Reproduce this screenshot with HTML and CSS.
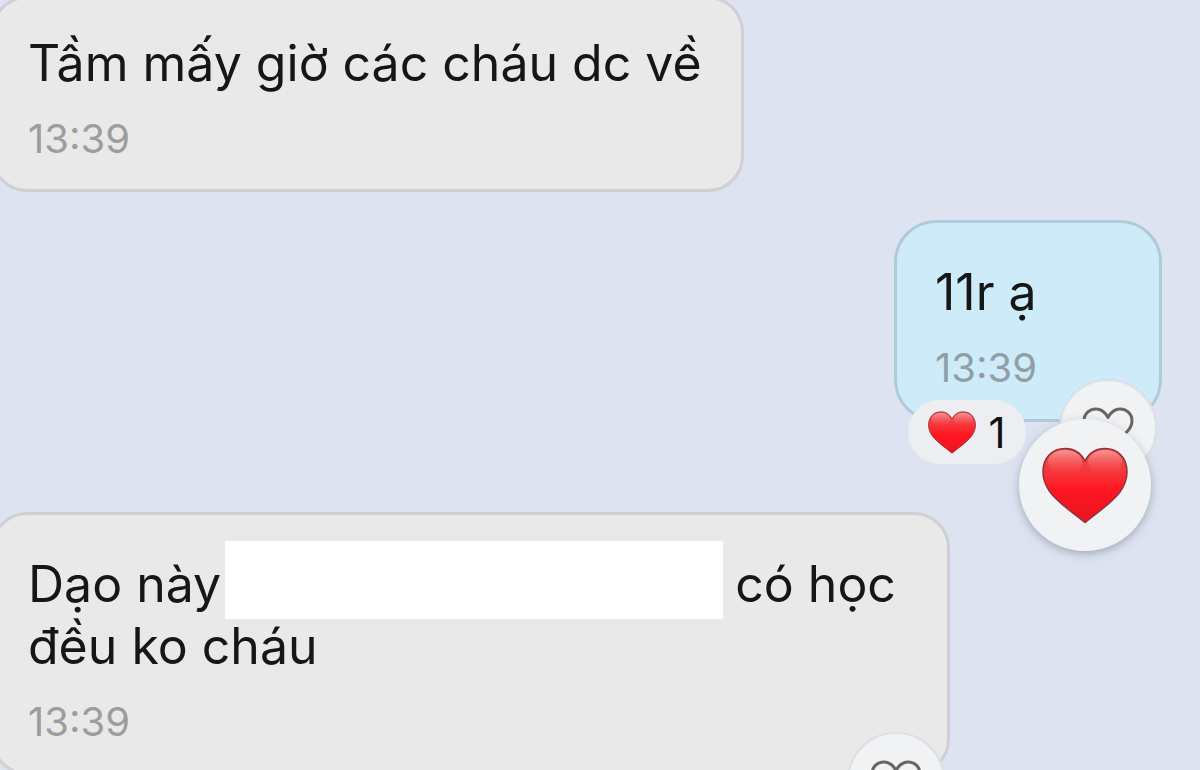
FILE: index.html
```html
<!DOCTYPE html>
<html lang="vi">
<head>
<meta charset="utf-8">
<meta name="viewport" content="width=device-width, initial-scale=1">
<title>Tin nhắn</title>
<link rel="stylesheet" href="styles.css">
</head>
<body>
<svg class="defs" aria-hidden="true">
  <defs>
    <linearGradient id="red" x1="0" y1="0" x2="0" y2="1">
      <stop offset="0" stop-color="#ea5052"/>
      <stop offset="0.3" stop-color="#f5383d"/>
      <stop offset="0.55" stop-color="#ff1722"/>
      <stop offset="1" stop-color="#e9141f"/>
    </linearGradient>
    <linearGradient id="gloss" x1="0" y1="0" x2="0" y2="1">
      <stop offset="0" stop-color="#ffc4bf" stop-opacity="0.6"/>
      <stop offset="1" stop-color="#ff6a68" stop-opacity="0"/>
    </linearGradient>
    <symbol id="heart-red" viewBox="0 0 86 77">
      <path d="M43 75.500C33 67 17 57 8 45C3 38 1 32 1 25C1 10 11 1.500 23 1.500C32 1.500 39 6 43 14C47 6 54 1.500 63 1.500C75 1.500 85 10 85 25C85 32 83 38 78 45C69 57 53 67 43 75.500Z" fill="url(#red)" stroke="#91343d" stroke-width="1.500"/>
      <ellipse cx="23" cy="15" rx="17" ry="12" fill="url(#gloss)"/>
      <ellipse cx="63" cy="15" rx="17" ry="12" fill="url(#gloss)"/>
    </symbol>
    <symbol id="heart-line" viewBox="0 0 52 42">
      <path d="M26 10.500C23 5 19 2 14 2C7 2 2 7 2 14C2 25 16 31 26 40C36 31 50 25 50 14C50 7 45 2 38 2C33 2 29 5 26 10.500Z" fill="none" stroke="#666" stroke-width="3" stroke-linejoin="round"/>
    </symbol>
  </defs>
</svg>
<main class="chat">
  <article class="bubble received">
    <p class="text">Tầm mấy giờ các cháu dc về</p>
    <time class="time">13:39</time>
  </article>
  <article class="bubble sent">
    <p class="text">11r ạ</p>
    <time class="time">13:39</time>
    <button class="count" type="button" aria-label="1 lượt thích"><svg class="count-heart"><use href="#heart-red"/></svg><span>1</span></button>
    <button class="react" type="button" aria-label="Thả tim"><svg class="react-heart"><use href="#heart-line"/></svg></button>
    <button class="big" type="button" aria-label="Tim"><svg class="big-heart"><use href="#heart-red"/></svg></button>
  </article>
  <article class="bubble received question">
    <p class="text">Dạo này<span class="redacted"></span>có học<br>đều ko cháu</p>
    <time class="time">13:39</time>
    <button class="react" type="button" aria-label="Thả tim"><svg class="react-heart"><use href="#heart-line"/></svg></button>
  </article>
</main>
</body>
</html>
```
FILE: styles.css
```css
* { box-sizing: border-box; }
body {
  margin: 0;
  min-height: 100vh;
  overflow: hidden;
  background: #dde3f0;
  font-family: Inter, "Noto Sans", sans-serif;
  color: #161616;
}
.defs { position: absolute; width: 0; height: 0; }
.chat {
  display: flex;
  flex-direction: column;
  height: 100vh;
  margin: -4px 38px 0 -9px;
}
.bubble {
  position: relative;
  flex: none;
  border: 3px solid #cfd0d4;
  border-radius: 36px;
}
.received {
  align-self: flex-start;
  padding: 33px 39px 26px 34px;
  background: #e9e9e9;
}
.sent {
  align-self: flex-end;
  margin: 28px 0 90px;
  padding: 38px 122px 27px 38px;
  border-color: #b0cad9;
  border-radius: 42px;
  background: #ceebf9;
}
.question { padding-right: 51px; padding-top: 38px; }
.text {
  margin: 0;
  font-size: 50px;
  line-height: 62px;
  white-space: nowrap;
}
.time {
  display: block;
  margin-top: 21px;
  font-size: 40px;
  line-height: 48px;
  color: #9d9d9d;
}
.sent .time { color: #909fa7; }
.redacted {
  display: inline-block;
  width: 498px;
  height: 78px;
  margin: -20px 12px -4px 4px;
  vertical-align: middle;
  background: #fff;
}
button {
  display: flex;
  align-items: center;
  justify-content: center;
  padding: 0;
  border: 0;
  font: inherit;
  color: #111;
  background: #f1f2f4;
}
.react {
  position: absolute;
  right: 2px;
  bottom: -58px;
  width: 98px;
  height: 98px;
  border: 2px solid #dcdfe3;
  border-radius: 50%;
}
.react-heart { width: 52px; height: 42px; }
.count {
  position: absolute;
  left: 11px;
  bottom: -45px;
  gap: 12px;
  width: 118px;
  height: 64px;
  border-radius: 32px;
  font-size: 42px;
  background: #eceef1;
}
.count-heart { width: 48px; height: 43px; }
.big {
  position: absolute;
  right: 8px;
  bottom: -132px;
  width: 132px;
  height: 132px;
  border-radius: 50%;
  box-shadow: 0 3px 8px #6d768580;
}
.big-heart { width: 86px; height: 77px; }
```
